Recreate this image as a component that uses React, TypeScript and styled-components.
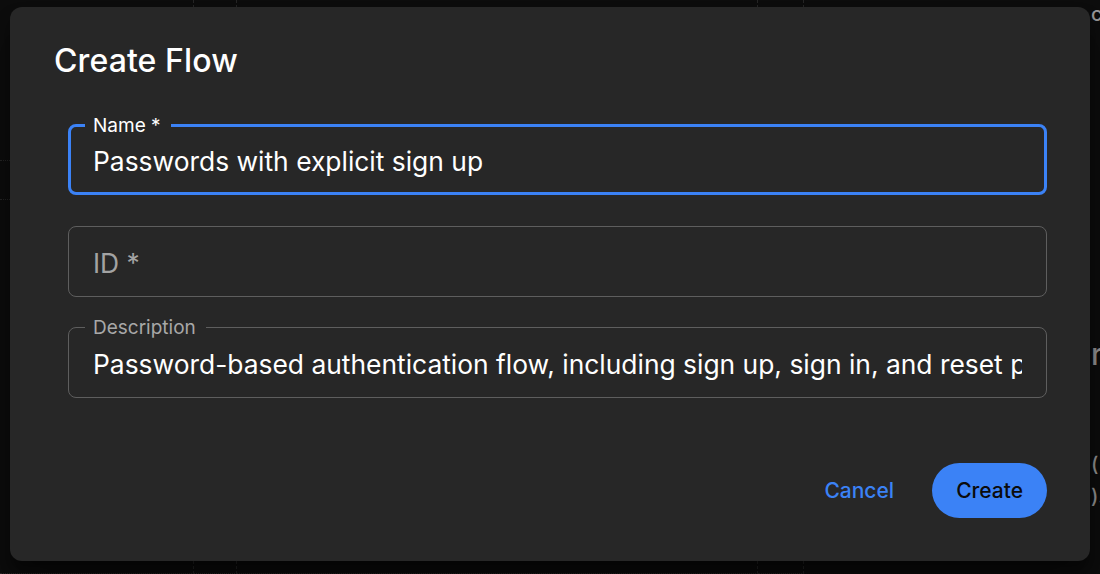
import styled, { createGlobalStyle } from "styled-components";

const GlobalStyle = createGlobalStyle`
  html, body {
    margin: 0;
    padding: 0;
    background: #0d0d0d;
    font-family: Inter, "Noto Sans", "Liberation Sans", sans-serif;
    overflow: hidden;
  }
`;

const Backdrop = styled.div`
  position: fixed;
  inset: 0;
  display: grid;
  grid-template-columns: 194px 43px 521px 46px 1fr;
  grid-template-rows: 161px 39px 1fr;
  background: #0d0d0d;
`;

const BackCell = styled.div`
  border-right: 1px dashed #262626;
  border-bottom: 1px dotted #262626;
`;

const PeekColumn = styled.div`
  grid-column: 5;
  grid-row: 1 / span 3;
  padding-left: 287px;
  color: #9a9a9a;
  white-space: nowrap;
  overflow: hidden;
  display: flex;
  flex-direction: column;
`;

const PeekText = styled.span<{ $size: number; $top: number }>`
  font-size: ${(p) => p.$size}px;
  margin-top: ${(p) => p.$top}px;
  font-weight: 500;
  line-height: 1.2;
`;

const Dialog = styled.div`
  position: fixed;
  top: 7px;
  left: 10px;
  width: 1080px;
  height: 554px;
  box-sizing: border-box;
  background: #272727;
  border-radius: 12px;
  box-shadow: 0 11px 15px rgba(0, 0, 0, 0.4), 0 24px 38px rgba(0, 0, 0, 0.3);
  padding: 32px 43px 43px 58px;
  display: flex;
  flex-direction: column;
`;

const Title = styled.h2`
  margin: 0 0 41px -14px;
  font-size: 32px;
  line-height: 44px;
  font-weight: 500;
  color: #ffffff;
  letter-spacing: 0.1px;
`;

const Fields = styled.div`
  display: flex;
  flex-direction: column;
  gap: 30.5px;
`;

const FieldBox = styled.div<{ $focused?: boolean }>`
  position: relative;
  height: 71px;
  box-sizing: border-box;
  border: ${(p) => (p.$focused ? "3px solid #3b82f6" : "1px solid #5e5e5e")};
  border-radius: 8px;
  display: flex;
  align-items: center;
`;

const FloatLabel = styled.span<{ $focused?: boolean }>`
  position: absolute;
  top: ${(p) => (p.$focused ? "-1.5px" : "-0.5px")};
  left: ${(p) => (p.$focused ? "14px" : "16px")};
  transform: translateY(-50%);
  padding: 0 10px 0 8px;
  background: #272727;
  font-size: 19px;
  line-height: 22px;
  color: ${(p) => (p.$focused ? "#ffffff" : "#a8a8a8")};
`;

const TextInput = styled.input<{ $focused?: boolean }>`
  flex: 1;
  min-width: 0;
  height: 100%;
  box-sizing: border-box;
  border: none;
  outline: none;
  background: transparent;
  padding: 0 ${(p) => (p.$focused ? "22px" : "24px")};
  padding-top: 3px;
  font-family: inherit;
  font-size: 26.4px;
  color: #ffffff;

  &::placeholder {
    color: #a3a3a3;
    opacity: 1;
  }
`;

const Actions = styled.div`
  margin-top: auto;
  display: flex;
  justify-content: flex-end;
  align-items: center;
  gap: 22px;
`;

const TextButton = styled.button`
  border: none;
  background: transparent;
  color: #3b82f6;
  font-family: inherit;
  font-size: 21px;
  font-weight: 500;
  padding: 0 16px;
  height: 55px;
  cursor: pointer;
`;

const PrimaryButton = styled.button`
  border: none;
  background: #3b82f6;
  color: #0b0b0b;
  font-family: inherit;
  font-size: 21px;
  font-weight: 500;
  height: 55px;
  padding: 0 24px;
  border-radius: 28px;
  cursor: pointer;
`;

export default function App() {
  return (
    <>
      <GlobalStyle />
      <Backdrop>
        {Array.from({ length: 12 }).map((_, i) => (
          <BackCell key={i} style={{ gridColumn: (i % 4) + 1, gridRow: Math.floor(i / 4) + 1 }} />
        ))}
        <PeekColumn>
          <PeekText $size={20} $top={2}>c</PeekText>
          <PeekText $size={30} $top={310}>ri</PeekText>
          <PeekText $size={20} $top={80}>( c</PeekText>
          <PeekText $size={20} $top={8}>).</PeekText>
        </PeekColumn>
      </Backdrop>
      <Dialog>
        <Title>Create Flow</Title>
        <Fields>
          <FieldBox $focused>
            <FloatLabel $focused>Name *</FloatLabel>
            <TextInput $focused readOnly defaultValue="Passwords with explicit sign up" />
          </FieldBox>
          <FieldBox>
            <TextInput readOnly placeholder="ID *" />
          </FieldBox>
          <FieldBox>
            <FloatLabel>Description</FloatLabel>
            <TextInput
              readOnly
              defaultValue="Password-based authentication flow, including sign up, sign in, and reset password"
            />
          </FieldBox>
        </Fields>
        <Actions>
          <TextButton>Cancel</TextButton>
          <PrimaryButton>Create</PrimaryButton>
        </Actions>
      </Dialog>
    </>
  );
}
